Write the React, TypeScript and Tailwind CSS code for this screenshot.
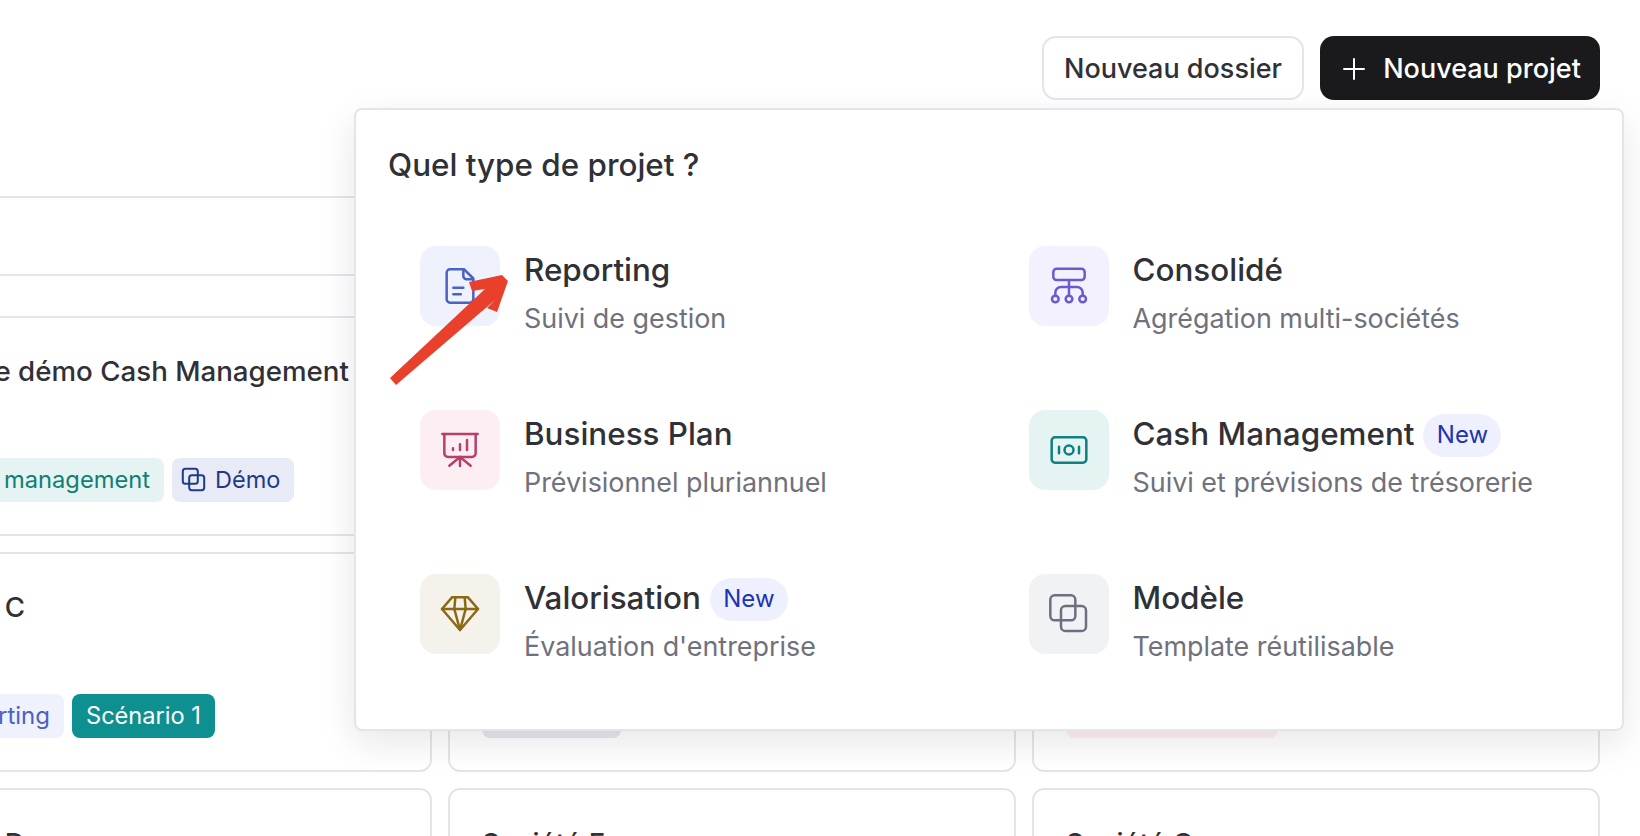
import React from "react";

const font = { fontFamily: "Inter, 'Noto Sans', sans-serif" };

function Box({ children, color, w = 2.5 }: { children: React.ReactNode; color: string; w?: number }) {
  return (
    <svg width="40" height="40" viewBox="0 0 24 24" fill="none" stroke={color} strokeWidth={w / 1.667} strokeLinecap="round" strokeLinejoin="round" className="overflow-visible">
      {children}
    </svg>
  );
}

const FileI = () => (
  <Box color="#4a62c4">
    <path d="M14.5 2H6a2 2 0 0 0-2 2v16a2 2 0 0 0 2 2h12a2 2 0 0 0 2-2V7.5z" />
    <path d="M14 2.2V6a2 2 0 0 0 2 2h3.8" />
    <path d="M8 13h6M8 17h4.5" />
  </Box>
);
const OrgI = () => (
  <Box color="#6a5acd">
    <rect x="2.6" y="1.6" width="18.8" height="6.8" rx="2" />
    <path d="M12 8.4v9.4" />
    <path d="M3.8 17.8V16a3.4 3.4 0 0 1 3.4-3.4h9.6a3.4 3.4 0 0 1 3.4 3.4v1.8" />
    <circle cx="3.8" cy="19.8" r="2" />
    <circle cx="12" cy="19.8" r="2" />
    <circle cx="20.2" cy="19.8" r="2" />
  </Box>
);
const BoardI = () => (
  <Box color="#b83f6b">
    <path d="M1.4 2.4h21.2" />
    <path d="M2.6 2.4V14a2.2 2.2 0 0 0 2.2 2.2h14.4a2.2 2.2 0 0 0 2.2-2.2V2.4" />
    <path d="M12 16.2v5.4M12 16.2l-6.4 5.2M12 16.2l6.4 5.2" />
    <path d="M7.8 11v1M12 8.6V12M16.2 6v6" />
  </Box>
);
const NoteI = () => (
  <Box color="#0f7f7f">
    <rect x="1.6" y="4.4" width="20.8" height="15.2" rx="2" />
    <circle cx="12" cy="12" r="2.7" />
    <path d="M6 10v4M18 10v4" />
  </Box>
);
const GemI = () => (
  <Box color="#8a6914">
    <path d="M7.2 2h9.6l6 7L12 21.6 1.2 9z" />
    <path d="M1.2 9h21.6" />
    <path d="M8.6 9 12 21.6 15.4 9" />
    <path d="M9.2 2 8.6 9M14.8 2l.6 7" />
  </Box>
);
const CopyIcon = ({ size = 40, color = "#6b7080", w = 2.5 }: { size?: number; color?: string; w?: number }) => (
  <svg width={size} height={size} viewBox="0 0 24 24" fill="none" stroke={color} strokeWidth={(w * 24) / size} strokeLinejoin="round" className="overflow-visible">
    <rect x="0.8" y="0.8" width="15" height="15" rx="2.6" />
    <rect x="7.2" y="7.2" width="15" height="15" rx="2.6" />
  </svg>
);

function Badge() {
  return (
    <span className="ml-[9px] flex h-[43px] w-[78px] items-center justify-center rounded-full bg-[#eef0fd] text-[24px] font-normal text-[#1e34b0]">
      New
    </span>
  );
}

function Item({ tile, icon, title, sub, badge }: { tile: string; icon: React.ReactNode; title: string; sub: string; badge?: boolean }) {
  return (
    <div className="flex gap-6 p-8">
      <div className={`flex h-20 w-20 shrink-0 items-center justify-center rounded-2xl ${tile}`}>{icon}</div>
      <div className="flex flex-col pt-1">
        <div className="flex h-10 items-center pt-0.5 text-[31.4px] font-medium whitespace-nowrap text-[#303136]">
          {title}
          {badge && <Badge />}
        </div>
        <div className="mt-[10px] mb-px text-[26.9px] leading-9 whitespace-nowrap text-[#6f717c]">{sub}</div>
      </div>
    </div>
  );
}

function Tag({ className, children }: { className: string; children?: React.ReactNode }) {
  return (
    <span className={`flex h-11 items-center gap-[9px] rounded-lg px-[14px] whitespace-nowrap ${className}`}>{children}</span>
  );
}

function Card({ title, children }: { title?: string; children?: React.ReactNode }) {
  return (
    <div className="h-[220px] rounded-xl border-2 border-[#e4e4ea] bg-white px-8 pt-[37px]">
      <div className="h-8 text-[27.7px] leading-8 font-medium whitespace-nowrap text-[#303136]">{title}</div>
      <div className="mt-[71px] flex gap-2">{children}</div>
    </div>
  );
}

export default function App() {
  return (
    <div className="relative h-[836px] w-[1640px] overflow-hidden bg-white" style={font}>
      <div className="flex justify-end gap-4 pt-9 pr-10">
        <button className="flex h-16 w-[262px] items-center justify-center rounded-[14px] border-2 border-[#e4e4ea] bg-white pt-0.5 text-[27px] font-medium text-[#303136]">
          Nouveau dossier
        </button>
        <button className="flex h-16 w-[280px] items-center justify-center gap-[18px] rounded-[14px] bg-[#1a1a1c] pt-0.5 pl-1 text-[27px] font-medium text-white">
          <svg width="22" height="22" viewBox="0 0 22 22" stroke="#fff" strokeWidth="2" strokeLinecap="round">
            <path d="M11 1v20M1 11h20" />
          </svg>
          Nouveau projet
        </button>
      </div>

      <div className="mt-24 -ml-[136px] pr-10">
        <div className="grid grid-cols-3 gap-4">
          <div className="h-20 rounded-xl border-2 border-[#e4e4ea]" />
          <div className="h-20 rounded-xl border-2 border-[#e4e4ea]" />
          <div className="h-20 rounded-xl border-2 border-[#e4e4ea]" />
        </div>
        <div className="mt-10 grid grid-cols-3 gap-4">
          <Card title="Exemple démo Cash Management">
            <Tag className="w-[266px] bg-[#e5f4f2] text-[23.7px] text-[#0f7f75]">
              <span className="w-6" />
              Cash management
            </Tag>
            <Tag className="bg-[#e8ebf5] pl-[10px] text-[23.5px] text-[#1e3a8a]">
              <CopyIcon size={24} color="#1e3a8a" w={2} />
              Démo
            </Tag>
          </Card>
          <Card />
          <Card />
          <Card title="Société C">
            <Tag className="w-[166px] bg-[#eff1fd] text-[24px] text-[#4a62c4]">
              <span className="w-6" />
              Reporting
            </Tag>
            <Tag className="bg-[#0f9090] text-[23.6px] text-white">Scénario 1</Tag>
          </Card>
          <Card>
            <Tag className="w-[139px] bg-[#e6e6f0]" />
          </Card>
          <Card>
            <Tag className="w-[212px] bg-[#fdeef1]" />
          </Card>
          <Card title="Société D" />
          <Card title="Société F" />
          <Card title="Société G" />
        </div>
      </div>

      <div className="absolute top-[108px] left-[354px] w-[1270px] rounded-lg border-2 border-[#e4e4ea] bg-white pt-[35px] pr-8 pb-8 pl-8 shadow-[0_12px_36px_rgba(20,20,40,0.10)]">
        <div className="h-10 text-[31.4px] leading-10 font-medium text-[#303136]">Quel type de projet ?</div>
        <div className="mt-[29px] grid grid-cols-2 gap-x-[15px] gap-y-[9px]">
          <Item tile="bg-[#eff1fd]" icon={<FileI />} title="Reporting" sub="Suivi de gestion" />
          <Item tile="bg-[#f3f1fd]" icon={<OrgI />} title="Consolidé" sub="Agrégation multi-sociétés" />
          <Item tile="bg-[#fdeef3]" icon={<BoardI />} title="Business Plan" sub="Prévisionnel pluriannuel" />
          <Item tile="bg-[#e5f4f2]" icon={<NoteI />} title="Cash Management" sub="Suivi et prévisions de trésorerie" badge />
          <Item tile="bg-[#f4f2ea]" icon={<GemI />} title="Valorisation" sub="Évaluation d'entreprise" badge />
          <Item tile="bg-[#f1f2f3]" icon={<CopyIcon />} title="Modèle" sub="Template réutilisable" />
        </div>
      </div>

      <svg className="absolute top-[270px] left-[385px]" width="130" height="120" viewBox="0 0 130 120">
        <polygon points="5,108 11,115 110,30 102,38 112,42 123,11 117,5 84,12 87,21 100,19" fill="#e8402a" />
      </svg>
    </div>
  );
}
